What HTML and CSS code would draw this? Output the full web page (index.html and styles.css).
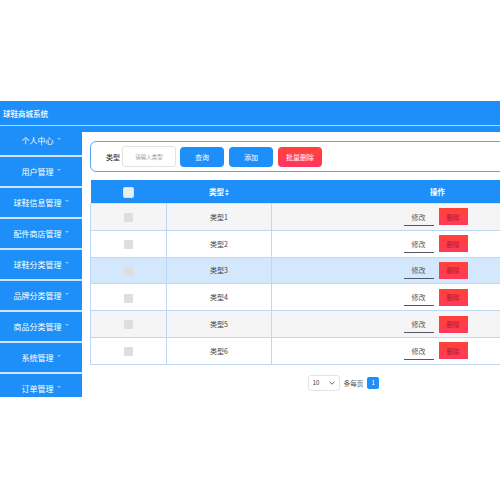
FILE: index.html
```html
<!DOCTYPE html>
<html lang="zh">
<head>
<meta charset="utf-8">
<title>球鞋商城系统</title>
<link rel="stylesheet" href="styles.css">
</head>
<body>
<div class="top-space"></div>
<header class="header">球鞋商城系统</header>
<div class="layout">
  <nav class="sidebar">
    <div class="menu-item">个人中心<span class="caret"></span></div>
    <div class="menu-item">用户管理<span class="caret"></span></div>
    <div class="menu-item">球鞋信息管理<span class="caret"></span></div>
    <div class="menu-item">配件商店管理<span class="caret"></span></div>
    <div class="menu-item">球鞋分类管理<span class="caret"></span></div>
    <div class="menu-item">品牌分类管理<span class="caret"></span></div>
    <div class="menu-item">商品分类管理<span class="caret"></span></div>
    <div class="menu-item">系统管理<span class="caret"></span></div>
    <div class="menu-item">订单管理<span class="caret"></span></div>
  </nav>
  <main class="main">
    <div class="search-form">
      <span class="label">类型</span>
      <span class="input">请输入类型</span>
      <button class="btn btn-blue">查询</button>
      <button class="btn btn-blue">添加</button>
      <button class="btn btn-red">批量删除</button>
    </div>
    <table class="table">
      <colgroup><col class="c1"><col class="c2"><col class="c3"></colgroup>
      <thead>
        <tr>
          <th><span class="check head-check"></span></th>
          <th>类型<svg class="sort" width="4" height="7" viewBox="0 0 4 7"><path d="M2 0 L4 3 L0 3 Z M0 4 L4 4 L2 7 Z" fill="#cfe6ff"/></svg></th>
          <th>操作</th>
        </tr>
      </thead>
      <tbody>
        <tr class="odd"><td><span class="check"></span></td><td>类型1</td><td><span class="ops"><span class="edit">修改</span><span class="del">删除</span></span></td></tr>
        <tr><td><span class="check"></span></td><td>类型2</td><td><span class="ops"><span class="edit">修改</span><span class="del">删除</span></span></td></tr>
        <tr class="hover"><td><span class="check"></span></td><td>类型3</td><td><span class="ops"><span class="edit">修改</span><span class="del">删除</span></span></td></tr>
        <tr><td><span class="check"></span></td><td>类型4</td><td><span class="ops"><span class="edit">修改</span><span class="del">删除</span></span></td></tr>
        <tr class="odd"><td><span class="check"></span></td><td>类型5</td><td><span class="ops"><span class="edit">修改</span><span class="del">删除</span></span></td></tr>
        <tr><td><span class="check"></span></td><td>类型6</td><td><span class="ops"><span class="edit">修改</span><span class="del">删除</span></span></td></tr>
      </tbody>
    </table>
    <div class="pager">
      <span class="select">10<svg width="6" height="4" viewBox="0 0 6 4"><path d="M0.5 0.8 L3 3.2 L5.5 0.8" fill="none" stroke="#666" stroke-width="1"/></svg></span>
      <span class="per">条每页</span>
      <span class="page">1</span>
    </div>
  </main>
</div>
</body>
</html>
```

FILE: styles.css
```css
html, body {
  margin: 0;
  padding: 0;
  overflow: hidden;
  width: 500px;
  height: 500px;
  background: #fff;
  font-family: "Noto Sans CJK SC", "Noto Sans", sans-serif;
}

.top-space {
  height: 101px;
}

.header {
  width: 611px;
  height: 25px;
  line-height: 25px;
  background: #1e8ff8;
  color: #fff;
  font-size: 7.5px;
  font-weight: 500;
  padding-left: 3px;
  box-sizing: border-box;
  border-bottom: 1px solid #b7d8fb;
}

.layout {
  display: flex;
  width: 611px;
}

.sidebar {
  width: 82px;
  height: 271px;
  flex: none;
  overflow: hidden;
  display: flex;
  flex-direction: column;
  gap: 2px;
  background: #cfe5fc;
}

.menu-item {
  flex: none;
  height: 29px;
  background: #1e8ff8;
  color: #fff;
  font-size: 8px;
  display: flex;
  align-items: center;
  justify-content: center;
}

.caret {
  width: 0;
  height: 0;
  border-left: 2px solid transparent;
  border-right: 2px solid transparent;
  border-top: 2px solid #8cc4fb;
  margin-left: 3px;
  margin-top: -3px;
}

.main {
  width: 529px;
  flex: none;
  border-top: 6px solid #1e8ff8;
  padding: 9px 8px 0;
  box-sizing: border-box;
}

.search-form {
  height: 31px;
  box-sizing: border-box;
  border: 1px solid #5ca6f6;
  border-radius: 6px;
  display: flex;
  align-items: center;
  padding-left: 15px;
}

.label {
  font-size: 7px;
  color: #333;
  font-weight: 500;
  margin-right: 2px;
}

.input {
  width: 54px;
  height: 21px;
  box-sizing: border-box;
  border: 1px solid #e2e2e2;
  border-radius: 3px;
  font-size: 5.5px;
  color: #999;
  display: flex;
  align-items: center;
  justify-content: center;
  margin-right: 4px;
}

.btn {
  width: 44px;
  height: 20px;
  border: none;
  border-radius: 4px;
  color: #fff;
  font-family: inherit;
  font-size: 7px;
  padding: 0;
  margin-right: 5px;
}

.btn-blue {
  background: #1e8ff8;
}

.btn-red {
  background: linear-gradient(#ff4437, #ff3463);
}

.table {
  margin-top: 8px;
  width: 513px;
  border-collapse: collapse;
  table-layout: fixed;
  font-size: 7px;
  color: #444;
}

.c1 { width: 76px; }
.c2 { width: 105px; }
.c3 { width: 332px; }

.table th {
  height: 23px;
  background: #1e8ff8;
  color: #fff;
  font-size: 7.5px;
  font-weight: 700;
  text-align: center;
  padding: 0;
  border: none;
}

.sort {
  margin-left: 1px;
  vertical-align: -1px;
}

.table td {
  height: 25.8px;
  padding: 0;
  text-align: center;
  border: 1px solid #bdd7f6;
  border-top-color: #d3e4f8;
}

.table tr.odd td {
  background: #f5f5f5;
}

.table tr.hover td {
  background: #d3e7fd;
}

.check {
  display: inline-block;
  width: 9px;
  height: 9px;
  background: #dedede;
  border-radius: 1px;
  vertical-align: middle;
}

.head-check {
  background: #e9eef3;
  box-shadow: 0 0 0 1px #cfe3fb;
}

.ops {
  display: inline-flex;
  gap: 5px;
  align-items: center;
  vertical-align: middle;
  margin-left: -4px;
}

.edit {
  width: 30px;
  height: 17px;
  box-sizing: border-box;
  border-bottom: 1px solid #556;
  font-size: 7px;
  color: #555;
  display: flex;
  align-items: center;
  justify-content: center;
  margin-top: 1px;
}

.del {
  width: 29px;
  height: 17px;
  background: linear-gradient(#ff4238, #ff3a5a);
  color: #b0182f;
  font-size: 6.5px;
  display: flex;
  align-items: center;
  justify-content: center;
}

.pager {
  margin-top: 10px;
  display: flex;
  justify-content: center;
  align-items: center;
  gap: 4px;
  padding-right: 6px;
}

.select {
  width: 32px;
  height: 16px;
  box-sizing: border-box;
  border: 1px solid #e4e4e4;
  border-radius: 3px;
  font-size: 6px;
  color: #333;
  display: flex;
  align-items: center;
  justify-content: space-between;
  padding: 0 4px;
}

.per {
  font-size: 6.5px;
  color: #555;
}

.page {
  width: 12px;
  height: 12px;
  background: #1e8ff8;
  color: #fff;
  font-size: 6px;
  border-radius: 2px;
  display: flex;
  align-items: center;
  justify-content: center;
}
```
